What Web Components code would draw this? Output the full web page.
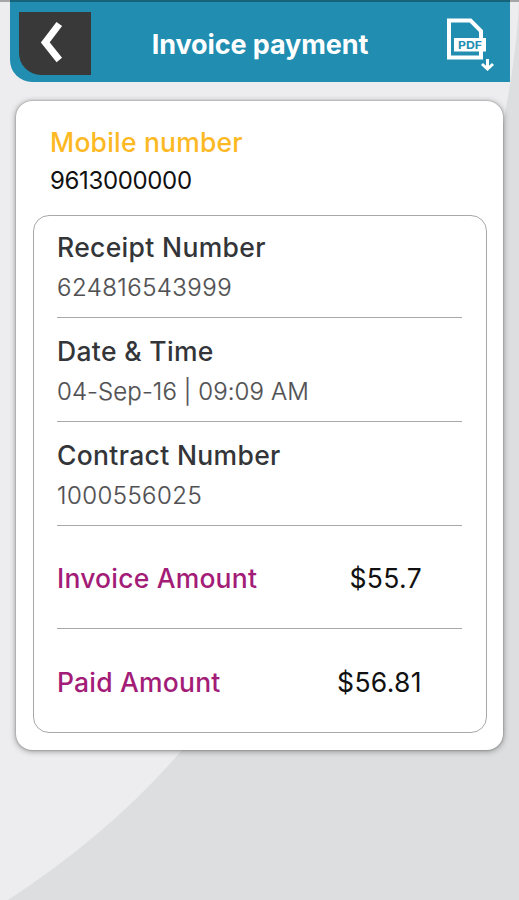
<!DOCTYPE html>
<html lang="en">
<head>
<meta charset="utf-8">
<title>Invoice payment</title>
<style>
body {
  margin: 0;
  font-family: Inter, "Liberation Sans", sans-serif;
}
.digits {
  --value-spacing: .45px;
}
</style>
</head>
<body>
<receipt-page>
    <page-header slot="header">Invoice payment</page-header>
    <receipt-card>
	<span slot="label">Mobile number</span>
	<span slot="value">9613000000</span>
	<receipt-field class="digits" label="Receipt Number">624816543999</receipt-field>
	<receipt-field label="Date &amp; Time">04-Sep-16 | 09:09 AM</receipt-field>
	<receipt-field class="digits" label="Contract Number">1000556025</receipt-field>
	<amount-row label="Invoice Amount">$55.7</amount-row>
	<amount-row label="Paid Amount">$56.81</amount-row>
    </receipt-card>
</receipt-page>

<script>
class BaseElement extends HTMLElement {
    constructor () {
	super();

	const $template			= document.createElement("template");
	$template.innerHTML		= `<style>\n${this.constructor.CSS}\n</style>` + this.constructor.template;

	this.attachShadow({ mode: "open" });
	this.shadowRoot.appendChild( $template.content.cloneNode(true) );
    }

    connectedCallback () {
	const $label			= this.shadowRoot.querySelector("#label");

	if ( $label )
	    $label.textContent		= this.getAttribute("label");
    }
}

class ReceiptPageElement extends BaseElement {
    static CSS				= `
:host {
  display: flex;
  flex-direction: column;
  position: relative;
  box-sizing: border-box;
  height: 900px;
  padding: 0 16px 0 16px;
  overflow: hidden;
  background: #ededef;
}
.backdrop {
  position: absolute;
  top: 0;
  left: 0;
}
header {
  position: relative;
  margin: 0 -7px 0 -6px;
}
main {
  position: relative;
  margin-top: 19px;
}
.status-edge {
  position: absolute;
  top: 0;
  left: 0;
  right: 0;
  height: 2px;
  background: rgba(0, 0, 0, .3);
}
`;

    static template			= `
<svg class="backdrop" width="519" height="900" viewBox="0 0 519 900">
    <path fill="#dcdedf" d="M519 0C517 50 509 90 504 120C450 370 370 560 182 750Q112 832 8 900H519V0Z"/>
</svg>
<header><slot name="header"></slot></header>
<main><slot></slot></main>
<div class="status-edge"></div>
`;
}

class PageHeaderElement extends BaseElement {
    static CSS				= `
:host {
  display: grid;
  grid-template-columns: 72px 1fr 72px;
  align-items: start;
  box-sizing: border-box;
  height: 82px;
  padding: 12px 9px 0;
  border-radius: 0 0 0 22px;
  background: #208db1;
  color: white;
}
button {
  display: block;
  width: 72px;
  height: 63px;
  padding: 0;
  border: none;
  border-radius: 0 0 0 22px;
  background: #393939;
}
svg {
  display: block;
}
h1 {
  margin: 16px 0 0;
  font-size: 27px;
  line-height: 34px;
  font-weight: 650;
  letter-spacing: -.1px;
  text-align: center;
  white-space: nowrap;
}
.pdf {
  justify-self: end;
  margin-right: 4px;
}
`;

    static template			= `
<button aria-label="Back">
    <svg width="72" height="63" viewBox="0 0 72 63" fill="none" stroke="white" stroke-width="7">
	<path d="M40.3 12L26.3 30.5L40.3 48"/>
    </svg>
</button>
<h1><slot></slot></h1>
<svg class="pdf" width="52" height="62" viewBox="0 0 52 62">
    <g fill="none" stroke="white" stroke-width="4">
	<path d="M36 38V45.5H4V8.5H25.5L36 19V26"/>
	<path stroke-width="3" d="M42.5 47V57M37 52L42.5 57L48 52"/>
    </g>
    <rect x="9" y="26" width="32" height="13.5" fill="white"/>
    <text x="13" y="36.8" font-size="11" font-weight="700" textLength="24" lengthAdjust="spacingAndGlyphs" fill="#208db1">PDF</text>
</svg>
`;
}

class ReceiptCardElement extends BaseElement {
    static CSS				= `
:host {
  display: block;
  box-sizing: border-box;
  height: 648.5px;
  padding: 24px 16px 0 17px;
  border-radius: 16px;
  background: white;
  box-shadow: 0 1px 6px rgba(0, 0, 0, .4), 0 0 2px rgba(0, 0, 0, .35);
}
.label,
.value {
  display: block;
  padding-left: 17px;
}
.label {
  font-size: 26.5px;
  line-height: 34px;
  font-weight: 550;
  letter-spacing: .2px;
  color: #fdb924;
}
.value {
  margin-top: 7px;
  font-size: 24px;
  line-height: 30px;
  letter-spacing: -.35px;
  color: #111;
}
.details {
  box-sizing: border-box;
  height: 518px;
  margin-top: 19px;
  padding: 0 24px 0 23px;
  border: 1.5px solid #a8a8a8;
  border-radius: 16px;
}
`;

    static template			= `
<div class="label"><slot name="label"></slot></div>
<div class="value"><slot name="value"></slot></div>
<div class="details"><slot></slot></div>
`;
}

class ReceiptFieldElement extends BaseElement {
    static CSS				= `
:host {
  display: block;
  box-sizing: border-box;
  height: 103.75px;
  padding-top: 16px;
  border-bottom: 1.5px solid #a8a8a8;
}
:host(:first-of-type) {
  height: 102px;
  padding-top: 14px;
}
#label {
  font-size: 26.5px;
  line-height: 34px;
  font-weight: 550;
  letter-spacing: .33px;
  color: #333539;
}
.value {
  margin-top: 9px;
  font-size: 24px;
  line-height: 30px;
  font-weight: 350;
  letter-spacing: var(--value-spacing, .1px);
  -webkit-text-stroke: .2px;
  color: #505052;
}
`;

    static template			= `
<div id="label"></div>
<div class="value"><slot></slot></div>
`;
}

class AmountRowElement extends BaseElement {
    static CSS				= `
:host {
  display: flex;
  justify-content: space-between;
  align-items: center;
  box-sizing: border-box;
  height: 103.75px;
  padding: 2px 40px 0 0;
  border-bottom: 1.5px solid #a8a8a8;
  font-size: 26.5px;
}
:host(:last-child) {
  border-bottom-color: transparent;
}
#label {
  font-weight: 550;
  letter-spacing: .2px;
  color: #a31c77;
}
.value {
  letter-spacing: .35px;
  color: #111;
}
`;

    static template			= `
<div id="label"></div>
<div class="value"><slot></slot></div>
`;
}

customElements.define("receipt-page", ReceiptPageElement );
customElements.define("page-header", PageHeaderElement );
customElements.define("receipt-card", ReceiptCardElement );
customElements.define("receipt-field", ReceiptFieldElement );
customElements.define("amount-row", AmountRowElement );
</script>
</body>
</html>
